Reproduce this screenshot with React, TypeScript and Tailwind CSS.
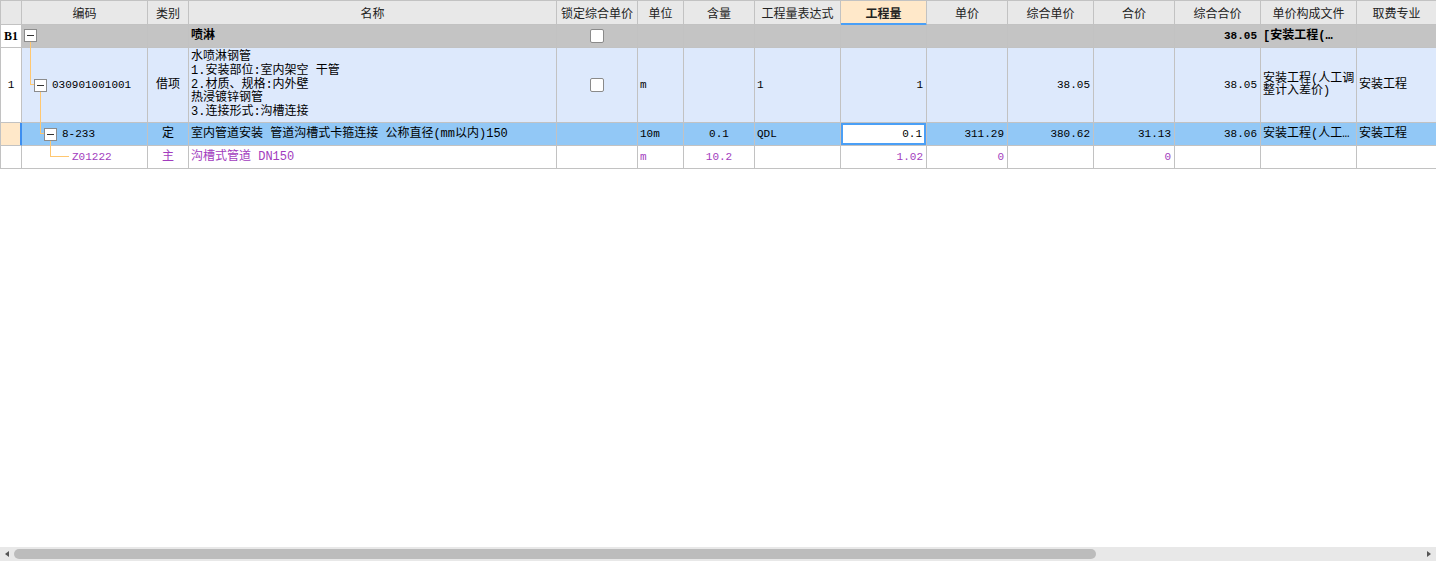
import type { ReactNode } from 'react';

const COLS =
  'grid grid-cols-[21px_126px_41px_368px_81px_46px_71px_86px_86px_81px_86px_81px_86px_96px_80px]';

const HEADERS = [
  '',
  '编码',
  '类别',
  '名称',
  '锁定综合单价',
  '单位',
  '含量',
  '工程量表达式',
  '工程量',
  '单价',
  '综合单价',
  '合价',
  '综合合价',
  '单价构成文件',
  '取费专业',
];

const BODY = "font-['Liberation_Mono','Noto_Sans_CJK_SC',monospace] text-[12px] leading-[14px]";
const NUM = "font-['Liberation_Mono',monospace] text-[11px]";
const LINE = 'absolute bg-[#ffc770]';

interface CellProps {
  className?: string;
  children?: ReactNode;
}

function Cell({ className = '', children }: CellProps) {
  return (
    <div className={`relative flex min-w-0 items-center border-r border-b border-[#c2c2c2] ${className}`}>
      {children}
    </div>
  );
}

function ExpandBox({ className }: { className: string }) {
  return (
    <span className={`absolute h-[13px] w-[13px] border border-[#8c8c8c] bg-white ${className}`}>
      <span className="absolute left-[2px] top-[5px] h-px w-[7px] bg-[#333]" />
    </span>
  );
}

function CheckBox() {
  return <span className="h-[14px] w-[14px] rounded-[2px] border border-[#8a8a8a] bg-white" />;
}

export default function App() {
  return (
    <div className="flex h-[561px] w-[1436px] flex-col overflow-hidden bg-white text-black">
      <div className="w-[1437px] border-t border-l border-[#c2c2c2]">
        {/* header */}
        <div className={`${COLS} h-[24px] bg-[#e8e8e8] font-['Noto_Sans_CJK_SC',sans-serif] text-[12px] text-[#222]`}>
          {HEADERS.map((h, i) =>
            h === '工程量' ? (
              <Cell
                key={i}
                className="justify-center border-b-[#4a9ff6] bg-[#ffe8c9] font-bold shadow-[inset_0_-1px_0_#4a9ff6]"
              >
                {h}
              </Cell>
            ) : (
              <Cell key={i} className="justify-center whitespace-nowrap">
                {h}
              </Cell>
            ),
          )}
        </div>

        {/* B1 section row */}
        <div className={`${COLS} h-[23px] bg-[#c4c4c4] ${BODY} font-bold`}>
          <Cell className="justify-center bg-white font-['Liberation_Serif',serif] text-[12px]">B1</Cell>
          <Cell>
            <ExpandBox className="left-[2px] top-[4px]" />
            <span className={`${LINE} bottom-[-1px] left-[8px] top-[17px] w-px`} />
          </Cell>
          <Cell />
          <Cell className="pl-[2px]">喷淋</Cell>
          <Cell className="justify-center">
            <CheckBox />
          </Cell>
          <Cell />
          <Cell />
          <Cell />
          <Cell />
          <Cell />
          <Cell />
          <Cell />
          <Cell className={`justify-end pr-[3px] ${NUM} font-bold`}>38.05</Cell>
          <Cell className="whitespace-nowrap pl-[2px]">[安装工程(…</Cell>
          <Cell />
        </div>

        {/* list item row */}
        <div className={`${COLS} h-[75px] bg-[#dde9fc] ${BODY}`}>
          <Cell className={`justify-center bg-white ${NUM}`}>1</Cell>
          <Cell className={`pl-[30px] ${NUM}`}>
            <span className={`${LINE} left-[8px] top-0 h-[37px] w-px`} />
            <span className={`${LINE} left-[8px] top-[36px] h-px w-[4px]`} />
            <ExpandBox className="left-[12px] top-[31px]" />
            <span className={`${LINE} bottom-[-1px] left-[18px] top-[44px] w-px`} />
            030901001001
          </Cell>
          <Cell className="justify-center">借项</Cell>
          <Cell className="items-start pl-[2px] pt-[3px] leading-[13.8px]">
            <div>
              水喷淋钢管
              <br />
              1.安装部位:室内架空 干管
              <br />
              2.材质、规格:内外壁
              <br />
              热浸镀锌钢管
              <br />
              3.连接形式:沟槽连接
            </div>
          </Cell>
          <Cell className="justify-center">
            <CheckBox />
          </Cell>
          <Cell className={`pl-[2px] ${NUM}`}>m</Cell>
          <Cell />
          <Cell className={`pl-[2px] ${NUM}`}>1</Cell>
          <Cell className={`justify-end pr-[3px] ${NUM}`}>1</Cell>
          <Cell />
          <Cell className={`justify-end pr-[3px] ${NUM}`}>38.05</Cell>
          <Cell />
          <Cell className={`justify-end pr-[3px] ${NUM}`}>38.05</Cell>
          <Cell className="pl-[2px] leading-[12.5px]">
            <div>
              安装工程(人工调
              <br />
              整计入差价)
            </div>
          </Cell>
          <Cell className="whitespace-nowrap pl-[2px]">安装工程</Cell>
        </div>

        {/* selected quota row */}
        <div className={`${COLS} h-[23px] bg-[#92c8f6] ${BODY}`}>
          <Cell className="border-r-[#3d8ef0] bg-[#ffe8c9] shadow-[inset_-1px_0_0_#3d8ef0]" />
          <Cell className={`pl-[40px] ${NUM}`}>
            <span className={`${LINE} left-[18px] top-0 h-[11px] w-px`} />
            <span className={`${LINE} left-[18px] top-[10px] h-px w-[4px]`} />
            <ExpandBox className="left-[22px] top-[5px]" />
            <span className={`${LINE} bottom-[-1px] left-[28px] top-[18px] w-px`} />
            8-233
          </Cell>
          <Cell className="justify-center">定</Cell>
          <Cell className="whitespace-nowrap pl-[2px]">室内管道安装 管道沟槽式卡箍连接 公称直径(mm以内)150</Cell>
          <Cell />
          <Cell className={`pl-[2px] ${NUM}`}>10m</Cell>
          <Cell className={`justify-center ${NUM}`}>0.1</Cell>
          <Cell className={`pl-[2px] ${NUM}`}>QDL</Cell>
          <Cell className={`justify-end bg-white pr-[4px] shadow-[inset_0_0_0_2px_#4a9ff6] ${NUM}`}>0.1</Cell>
          <Cell className={`justify-end pr-[3px] ${NUM}`}>311.29</Cell>
          <Cell className={`justify-end pr-[3px] ${NUM}`}>380.62</Cell>
          <Cell className={`justify-end pr-[3px] ${NUM}`}>31.13</Cell>
          <Cell className={`justify-end pr-[3px] ${NUM}`}>38.06</Cell>
          <Cell className="whitespace-nowrap pl-[2px]">安装工程(人工…</Cell>
          <Cell className="whitespace-nowrap pl-[2px]">安装工程</Cell>
        </div>

        {/* main material row */}
        <div className={`${COLS} h-[23px] bg-white text-[#a23cbe] ${BODY}`}>
          <Cell />
          <Cell className={`pl-[50px] ${NUM}`}>
            <span className={`${LINE} left-[28px] top-0 h-[11px] w-px`} />
            <span className={`${LINE} left-[28px] top-[10px] h-px w-[19px]`} />
            Z01222
          </Cell>
          <Cell className="justify-center">主</Cell>
          <Cell className="whitespace-nowrap pl-[2px]">沟槽式管道 DN150</Cell>
          <Cell />
          <Cell className={`pl-[2px] ${NUM}`}>m</Cell>
          <Cell className={`justify-center ${NUM}`}>10.2</Cell>
          <Cell />
          <Cell className={`justify-end pr-[3px] ${NUM}`}>1.02</Cell>
          <Cell className={`justify-end pr-[3px] ${NUM}`}>0</Cell>
          <Cell />
          <Cell className={`justify-end pr-[3px] ${NUM}`}>0</Cell>
          <Cell />
          <Cell />
          <Cell />
        </div>
      </div>

      {/* horizontal scrollbar */}
      <div className="mt-auto flex h-[14px] items-center bg-[#e8e8e8] px-[5px]">
        <span className="h-0 w-0 border-y-[3.5px] border-r-[4px] border-y-transparent border-r-[#555]" />
        <span className="ml-[5px] h-[10px] w-[1082px] rounded-full bg-[#bcbcbc]" />
        <span className="ml-auto h-0 w-0 border-y-[3.5px] border-l-[4px] border-y-transparent border-l-[#555]" />
      </div>
    </div>
  );
}
